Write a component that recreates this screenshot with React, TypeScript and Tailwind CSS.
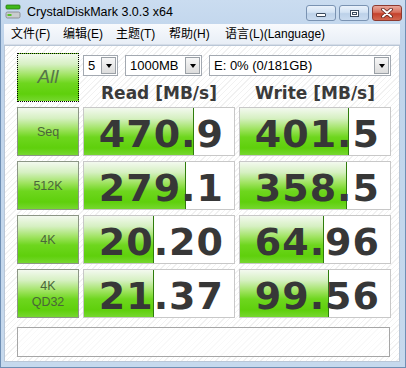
const rows = [
  { label: ['Seq'], read: '470.9', readFill: 110, write: '401.5', writeFill: 109 },
  { label: ['512K'], read: '279.1', readFill: 102, write: '358.5', writeFill: 107 },
  { label: ['4K'], read: '20.20', readFill: 70, write: '64.96', writeFill: 84 },
  { label: ['4K', 'QD32'], read: '21.37', readFill: 70, write: '99.56', writeFill: 89 },
];

const menu = [
  { text: '文件(F)', w: 'w-[52px]' },
  { text: '编辑(E)', w: 'w-[53px]' },
  { text: '主题(T)', w: 'w-[53px]' },
  { text: '帮助(H)', w: 'w-[56px]' },
  { text: '语言(L)(Language)', w: 'w-auto' },
];

const green =
  'bg-[linear-gradient(to_bottom,#f3f9ef_0%,#d6f0c2_22%,#9ee35f_45%,#6ed61e_62%,#5fd00c_85%,#76d72f_100%)]';

function AppIcon() {
  return (
    <svg width="16" height="16" viewBox="0 0 16 16">
      <rect x="1" y="1" width="14" height="4" rx="1" fill="#3fb81a" stroke="#2a7a12" strokeWidth="0.8" />
      <rect x="1" y="8" width="14" height="6" rx="1.5" fill="#c9ccce" stroke="#7d8286" strokeWidth="0.8" />
      <rect x="2.5" y="10" width="4" height="2" fill="#56c427" />
    </svg>
  );
}

function Select({ width, text }: { width: string; text: string }) {
  return (
    <div className={`${width} flex h-[21px] items-center border border-[#a3a9b1] bg-white pl-[4px] pr-[1px]`}>
      <span className="flex-1 text-[13px] leading-none text-black">{text}</span>
      <div className="flex h-[17px] w-[15px] items-center justify-center border border-[#9aa0a6] bg-[linear-gradient(to_bottom,#f7f7f7,#dcdcdc)]">
        <div className="h-0 w-0 border-x-[3.5px] border-t-[4px] border-x-transparent border-t-black" />
      </div>
    </div>
  );
}

function Value({ value, fill }: { value: string; fill: number }) {
  return (
    <div className="relative h-[49px] w-[152px] border border-[#c8c8c8] bg-white">
      <div className={`absolute inset-y-0 left-0 border-r border-[#2f7d0c] ${green}`} style={{ width: fill }} />
      <div className="relative flex h-full items-center justify-end pr-[10px] pt-[4px] font-['DejaVu_Sans',sans-serif] text-[38px] font-bold leading-none tracking-[1px] text-[#373737]">
        {value}
      </div>
    </div>
  );
}

function Label({ lines }: { lines: string[] }) {
  return (
    <div
      className={`flex h-[49px] w-[62px] flex-col items-center justify-center border border-[#8c9686] ${green} text-[12.5px] leading-[16px] text-[#4a663a]`}
    >
      {lines.map((l) => (
        <span key={l}>{l}</span>
      ))}
    </div>
  );
}

function CaptionButton({ children, close }: { children: React.ReactNode; close?: boolean }) {
  return (
    <div
      className={`flex h-[16px] w-[30px] items-center justify-center rounded-[3px] border ${
        close
          ? 'border-[#8d3a30] bg-[linear-gradient(to_bottom,#e9a99c_0%,#d7705d_45%,#c4412c_55%,#d2674f_100%)]'
          : 'border-[#7a93b2] bg-[linear-gradient(to_bottom,#eaf2fb_0%,#d2e2f3_45%,#bcd1e9_55%,#c9dbef_100%)]'
      }`}
    >
      {children}
    </div>
  );
}

export default function App() {
  return (
    <div className="flex h-[368px] w-[406px] flex-col border-x border-b border-[#6f8fb4] bg-[linear-gradient(to_bottom,#cadcf0,#bfd4eb_40px,#c6d9ed)] pl-[3px] pr-[5px] pb-[5px] font-['Liberation_Sans','Noto_Sans_CJK_SC',sans-serif]">
      <div className="flex h-[24px] shrink-0 items-center">
        <div className="ml-[1px] mr-[6px] flex items-center">
          <AppIcon />
        </div>
        <span className="text-[12.5px] text-black">CrystalDiskMark 3.0.3 x64</span>
        <div className="-mr-[2px] ml-auto flex items-center gap-[3px] self-start pt-[5px]">
          <CaptionButton>
            <div className="mt-[4px] h-[4px] w-[10px] rounded-[1px] border border-[#3b4b5e] bg-white" />
          </CaptionButton>
          <CaptionButton>
            <div className="h-[7px] w-[9px] border border-[#3b4b5e] bg-white p-[1px]">
              <div className="h-full w-full border border-[#3b4b5e]" />
            </div>
          </CaptionButton>
          <CaptionButton close>
            <svg width="12" height="10" viewBox="0 0 12 10">
              <path d="M2 1.5 L10 8.5 M10 1.5 L2 8.5" stroke="#5a2018" strokeWidth="3.6" strokeLinecap="round" />
              <path d="M2 1.5 L10 8.5 M10 1.5 L2 8.5" stroke="#ffffff" strokeWidth="2" strokeLinecap="round" />
            </svg>
          </CaptionButton>
        </div>
      </div>

      <div className="flex h-[21px] shrink-0 items-center border-b border-[#d5dde8] bg-[linear-gradient(to_bottom,#f8fafd,#e8eef6)] pl-[7px] text-[12px] text-black">
        {menu.map((m) => (
          <span key={m.text} className={m.w}>
            {m.text}
          </span>
        ))}
      </div>

      <div className="flex flex-1 flex-col border border-[#b9c6d6] bg-[repeating-linear-gradient(135deg,#ffffff_0px,#ffffff_3px,#f1f1f1_3px,#f1f1f1_4px)] pl-[12px] pt-[7px]">
        <div className="flex h-[49px]">
          <div
            className={`flex h-[49px] w-[62px] items-center justify-center border border-dotted border-black ${green} text-[19px] italic text-[#557548]`}
          >
            All
          </div>
          <div className="ml-[4px] flex flex-col">
            <div className="flex gap-[7px] pt-[2px]">
              <Select width="w-[35px]" text="5" />
              <Select width="w-[77px]" text="1000MB" />
              <Select width="w-[182px]" text="E: 0% (0/181GB)" />
            </div>
            <div className="mt-[9px] flex font-['DejaVu_Sans',sans-serif] text-[17px] font-bold leading-none text-[#3a3a3a]">
              <span className="w-[152px] text-center">Read [MB/s]</span>
              <span className="ml-[4px] w-[152px] text-center">Write [MB/s]</span>
            </div>
          </div>
        </div>

        <div className="mt-[5px] flex flex-col gap-[5px]">
          {rows.map((r) => (
            <div key={r.read} className="flex gap-[4px]">
              <Label lines={r.label} />
              <Value value={r.read} fill={r.readFill} />
              <Value value={r.write} fill={r.writeFill} />
            </div>
          ))}
        </div>

        <div className="mt-[9px] h-[30px] w-[373px] border border-[#a6a6a6] bg-white/60" />
      </div>
    </div>
  );
}
